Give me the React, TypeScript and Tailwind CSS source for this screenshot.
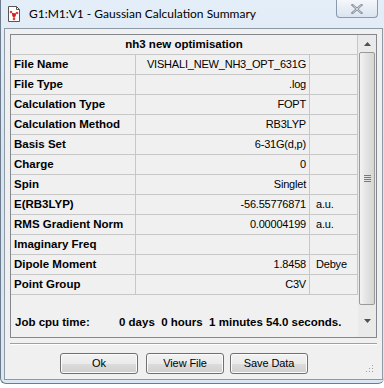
import React from 'react';

const rows: [string, string, string][] = [
  ['File Name', 'VISHALI_NEW_NH3_OPT_631G', ''],
  ['File Type', '.log', ''],
  ['Calculation Type', 'FOPT', ''],
  ['Calculation Method', 'RB3LYP', ''],
  ['Basis Set', '6-31G(d,p)', ''],
  ['Charge', '0', ''],
  ['Spin', 'Singlet', ''],
  ['E(RB3LYP)', '-56.55776871', 'a.u.'],
  ['RMS Gradient Norm', '0.00004199', 'a.u.'],
  ['Imaginary Freq', '', ''],
  ['Dipole Moment', '1.8458', 'Debye'],
  ['Point Group', 'C3V', ''],
];

const AppIcon = () => (
  <svg width="16" height="16" viewBox="0 0 16 16">
    <path d="M2.5 0.5h8l3 3v12h-11z" fill="#fff" stroke="#555" />
    <path d="M10.5 0.5v3h3" fill="none" stroke="#555" />
    <line x1="5" y1="6" x2="8" y2="9" stroke="#444" />
    <line x1="8" y1="9" x2="11" y2="7" stroke="#444" />
    <line x1="8" y1="9" x2="8" y2="13" stroke="#444" />
    <circle cx="8" cy="9" r="2" fill="#d42020" />
    <circle cx="5" cy="6" r="1.3" fill="#e04040" />
    <circle cx="11" cy="7" r="1.3" fill="#e04040" />
    <circle cx="8" cy="13" r="1.3" fill="#e04040" />
  </svg>
);

const Button = ({ label }: { label: string }) => (
  <button className="h-[21px] w-[78px] rounded-[3px] border border-[#707070] bg-[linear-gradient(180deg,#f2f2f2_0%,#ebebeb_50%,#dddddd_51%,#cfcfcf_100%)] text-[11px] tracking-[-0.1px] text-black shadow-[inset_0_0_0_1px_#fcfcfc]">
    {label}
  </button>
);

export default function App() {
  return (
    <div className="h-[388px] w-[384px] bg-white" style={{ fontFamily: '"Liberation Sans", Arial, sans-serif' }}>
      <div className="flex h-[384px] w-[384px] flex-col rounded-b-[6px] border-b border-l border-[#6d7c8c] bg-[linear-gradient(180deg,#e4eef8_0%,#d6e4f2_40%,#dae6f3_100%)] pl-[3px] pr-[1px] pb-[3px]">
        {/* title bar */}
        <div className="relative flex h-[28px] items-center gap-[7px] pl-[2px]">
          <AppIcon />
          <span className="text-[12px] text-black" style={{ fontFamily: 'Lato, sans-serif' }}>
            G1:M1:V1 - Gaussian Calculation Summary
          </span>
          <div className="absolute right-[5px] top-0 flex h-[18px] w-[42px] items-center justify-center rounded-b-[4px] border border-t-0 border-[#8a99ab] bg-[linear-gradient(180deg,#f4f7fb,#dbe4ef)]">
            <svg width="12" height="10" viewBox="0 0 12 10">
              <path d="M1.5 1l9 8M10.5 1l-9 8" stroke="#7c8590" strokeWidth="2.2" strokeLinecap="square" />
              <path d="M1.5 1l9 8M10.5 1l-9 8" stroke="#eef1f5" strokeWidth="0.8" />
            </svg>
          </div>
        </div>

        {/* client area */}
        <div className="flex flex-1 flex-col border border-[#8e99a6] bg-[#f0f0f0] px-[5px] pt-[5px]">
          <div className="flex h-[304px] border border-[#828790] bg-[#f0f0f0]">
            <div className="flex w-[347px] flex-col">
              <div className="flex h-[20px] items-center justify-center border-b border-r border-[#c7c7c7] text-[11.5px] font-bold">
                nh3 new optimisation
              </div>
              {rows.map(([label, value, unit]) => (
                <div key={label} className="grid h-[20px] grid-cols-[125px_174px_48px] text-[11px]">
                  <div className="flex items-center border-b border-r border-[#c7c7c7] pl-[3px] text-[11.5px] font-bold">{label}</div>
                  <div className="flex items-center justify-end border-b border-r border-[#c7c7c7] pr-[3px] tracking-[-0.2px]">{value}</div>
                  <div className="flex items-center border-b border-r border-[#c7c7c7] pl-[6px] tracking-[-0.2px]">{unit}</div>
                </div>
              ))}
              <div className="flex flex-1 items-center pb-[0px] pl-[4px] pt-[14px] text-[11.5px] font-bold">
                <span className="w-[104px]">Job cpu time:</span>
                <span className="whitespace-pre">0 days  0 hours  1 minutes 54.0 seconds.</span>
              </div>
            </div>
            {/* scrollbar */}
            <div className="flex w-[18px] flex-col bg-[#eaeaea]">
              <div className="flex h-[17px] items-center justify-center">
                <svg width="7" height="4" viewBox="0 0 7 4"><path d="M0 4L3.5 0L7 4z" fill="#505050" /></svg>
              </div>
              <div className="mx-[1px] flex h-[253px] items-center justify-center rounded-[2px] border border-[#9a9a9a] bg-[linear-gradient(90deg,#f3f3f3,#e2e2e2_50%,#d6d6d6)]">
                <div className="flex flex-col gap-[1px]">
                  <div className="h-[1px] w-[7px] bg-[#7a7a7a]" />
                  <div className="h-[1px] w-[7px] bg-[#7a7a7a]" />
                  <div className="h-[1px] w-[7px] bg-[#7a7a7a]" />
                  <div className="h-[1px] w-[7px] bg-[#7a7a7a]" />
                </div>
              </div>
              <div className="flex flex-1 items-center justify-center">
                <svg width="7" height="4" viewBox="0 0 7 4"><path d="M0 0L3.5 4L7 0z" fill="#505050" /></svg>
              </div>
            </div>
          </div>

          <div className="mt-[5px] h-[2px] border-t border-b border-t-[#a0a0a0] border-b-white" />

          <div className="relative flex flex-1 items-start pl-[50px] pt-[8px]">
            <Button label="Ok" />
            <div className="w-[8px]" />
            <Button label="View File" />
            <div className="w-[6px]" />
            <Button label="Save Data" />
            <svg className="absolute bottom-[6px] right-[3px]" width="8" height="8" viewBox="0 0 8 8">
              <rect x="6" y="0" width="1" height="1" fill="#a0a0a0" />
              <rect x="3" y="3" width="1" height="1" fill="#a0a0a0" />
              <rect x="6" y="3" width="1" height="1" fill="#a0a0a0" />
              <rect x="0" y="6" width="1" height="1" fill="#a0a0a0" />
              <rect x="3" y="6" width="1" height="1" fill="#a0a0a0" />
              <rect x="6" y="6" width="1" height="1" fill="#a0a0a0" />
            </svg>
          </div>
        </div>
      </div>
    </div>
  );
}
